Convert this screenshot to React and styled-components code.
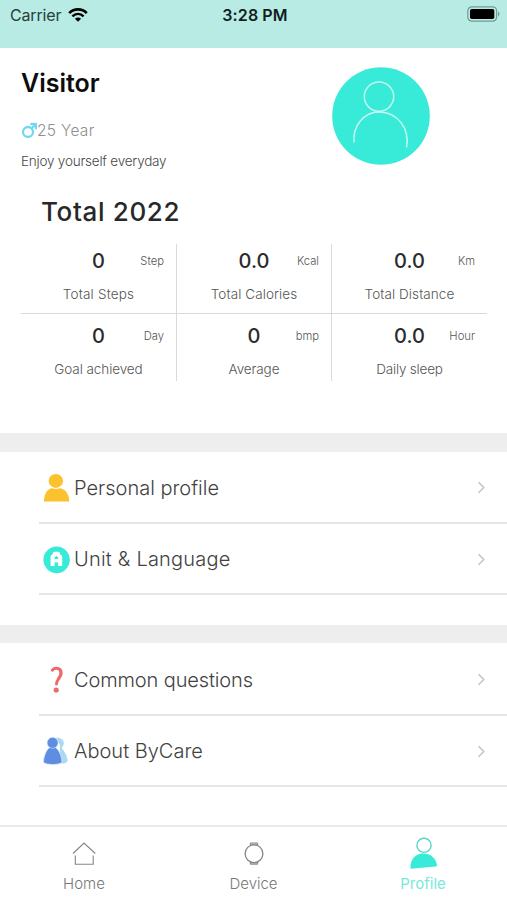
import React from "react";
import styled, { createGlobalStyle } from "styled-components";

const GlobalStyle = createGlobalStyle`
  * { box-sizing: border-box; }
  body { margin: 0; background: #fff; font-family: Inter, "Liberation Sans", sans-serif; }
`;

const Screen = styled.main`
  width: 507px;
  height: 900px;
  display: flex;
  flex-direction: column;
  overflow: hidden;
  background: #fff;
`;

const StatusBar = styled.header`
  flex: none;
  height: 48px;
  padding: 0 7px 0 10px;
  display: grid;
  grid-template-columns: 1fr auto 1fr;
  align-items: start;
  background: #b8ebe4;
`;

const Label = styled.span`
  display: block;
  white-space: nowrap;
  font-size: ${(p) => p.$size}px;
  line-height: ${(p) => p.$line}px;
  font-weight: ${(p) => p.$weight || 400};
  letter-spacing: ${(p) => p.$track || 0}px;
  color: ${(p) => p.$color};
`;

const Carrier = styled.div`
  display: flex;
  gap: 7px;
  height: 29px;
  align-items: center;
`;

const Power = styled.div`
  display: flex;
  justify-content: flex-end;
  height: 28px;
  align-items: center;
`;

const Hero = styled.section`
  flex: none;
  height: 144px;
  padding: 19px 77px 0 21px;
  display: flex;
  justify-content: space-between;
`;

const Age = styled.div`
  display: flex;
  align-items: center;
  margin: 20px 0 10px;
  height: 24px;
`;

const Heading = styled.h2`
  flex: none;
  margin: 0;
  height: 52px;
  padding: 4px 0 0 41px;
`;

const Stats = styled.section`
  flex: none;
  height: 137px;
  margin: 0 20px 52px 21px;
  display: grid;
  grid-template-columns: 156px 155px 155px;
  grid-template-rows: 70px 67px;
`;

const Stat = styled.div`
  border-right: ${(p) => (p.$last ? "0" : "1.5px solid #dadada")};
  border-bottom: ${(p) => (p.$top ? "1.5px solid #dadada" : "0")};
  padding-top: ${(p) => (p.$top ? 4 : 9)}px;
`;

const StatValue = styled.div`
  height: 27px;
  display: grid;
  grid-template-columns: 1fr auto 1fr;
  align-items: center;
  padding-right: 12px;
  padding-left: 12px;
  & > :first-child { grid-column: 2; }
  & > :last-child { justify-self: end; }
`;

const StatName = styled.div`
  display: flex;
  justify-content: center;
  margin-top: 9px;
`;

const Band = styled.div`
  flex: none;
  height: ${(p) => p.$height}px;
  background: #eee;
`;

const Menu = styled.nav`
  flex: none;
  height: ${(p) => p.$height}px;
  padding: ${(p) => p.$top || 0}px 0 0 39px;
`;

const MenuRow = styled.a`
  height: 72px;
  display: flex;
  align-items: center;
  padding: 1px 21px 0 4px;
  border-bottom: 2px solid #e6e6e6;
  &:last-child { height: 71px; }
`;

const MenuIcon = styled.span`
  width: 28px;
  height: 30px;
  margin-right: 3px;
  display: flex;
`;

const Chevron = styled.svg`
  margin-left: auto;
`;

const Tabs = styled.footer`
  flex: none;
  height: 75px;
  border-top: 2px solid #e9e9e9;
  display: grid;
  grid-template-columns: 168px 171px 168px;
`;

const Tab = styled.div`
  display: flex;
  flex-direction: column;
  align-items: center;
  padding-top: 9px;
`;

const TURQ = "#38ebd8";

const Wifi = () => (
  <svg width="20" height="16" viewBox="0 0 20 16" fill="none" stroke="#000">
    <path d="M1.2 6.1C6.2 1.2 13.8 1.2 18.8 6.1" strokeWidth="2.7" />
    <path d="M4.4 9.4C7.7 6.2 12.3 6.2 15.6 9.4" strokeWidth="2.5" />
    <path d="M10 14.8 6.9 11.8C8.7 10.1 11.3 10.1 13.1 11.8Z" fill="#000" stroke="none" />
  </svg>
);

const Battery = () => (
  <svg width="33" height="16" viewBox="0 0 33 16">
    <rect x=".8" y=".8" width="28.8" height="14.4" rx="4" fill="none" stroke="#739b95" strokeWidth="1.2" />
    <rect x="3" y="3" width="24.3" height="10" rx="1.8" fill="#000" />
    <path d="M31 5.6v4.8c1.9-.7 1.9-4.1 0-4.8Z" fill="#739b95" />
  </svg>
);

const Avatar = () => (
  <svg width="98" height="98" viewBox="0 0 98 98" fill="none">
    <circle cx="49" cy="49" r="48.8" fill={TURQ} />
    <g stroke="#c4f8f2" strokeWidth="1.5">
      <circle cx="47" cy="29.6" r="14.7" />
      <path d="M22 75.5C20.5 59 32 45 47 45c19 0 31 17 27.500 35.500" />
    </g>
  </svg>
);

const Male = () => (
  <svg width="16" height="18" viewBox="0 0 16 18" fill="none" stroke="#6fd8f4" strokeWidth="2.300">
    <circle cx="7" cy="10" r="5" />
    <path d="m10.500 6.500 4-4.200M9.300 1.900l5.500.2.200 5.200" />
  </svg>
);

const icons = {
  person: (
    <svg width="28" height="30" viewBox="0 0 28 30" fill="#fbc12f">
      <ellipse cx="12.800" cy="7.900" rx="7.200" ry="7" />
      <path d="M1 28.500C1 20 5 15.500 9.300 15.200q3.700 1.400 7.400 0C21 15.500 26.300 20 26.300 28.500Z" />
    </svg>
  ),
  language: (
    <svg width="28" height="30" viewBox="0 0 28 30">
      <circle cx="13.600" cy="15.800" r="13.200" fill={TURQ} />
      <path
        fill="#fff"
        fillRule="evenodd"
        d="M7.600 22V12.500q0-1.200 1.200-1.600.9-.4 1-1.500.2-1.600 1.700-1.600h3.800q1.500 0 1.700 1.600.1 1.100 1 1.500 1.200.4 1.200 1.600V22h-4v-3.600h-3.600V22ZM13.400 11.800l-1.900 2v1.300h3.800v-1.300Z"
      />
    </svg>
  ),
  question: (
    <svg width="28" height="30" viewBox="0 0 28 30" fill="none" stroke="#e96c6d">
      <path d="M9.300 5.200C12 2.200 18.200 2.600 18.200 8.300c0 4.300-4.400 5.500-4.700 10.700" strokeWidth="3" strokeLinecap="round" />
      <path d="M17.300 5.500c1.500 3.500-.3 6.200-2.300 8.500" strokeWidth="2.600" />
      <circle cx="13.200" cy="25" r="2.600" fill="#e96c6d" stroke="none" />
    </svg>
  ),
  people: (
    <svg width="28" height="30" viewBox="0 0 28 30">
      <path
        d="M13 1.800c4.500-.6 7.800 1.800 7.800 5.300 0 2-.9 3.600-2.100 4.800 3 3.300 5.500 8.300 6.100 12.900-.6 2-3 2.700-6 2.700h-2V9Z"
        fill="#a9daf2"
      />
      <path d="M6.800 11.500h5.600c3.500 1.800 6.200 8.800 6.600 14.300-.4 3.600-18.200 3.600-18.600 0 .5-5.500 2.800-12.300 6.400-14.300Z" fill="#5f8de2" stroke="#dcecfb" strokeWidth=".7" />
      <circle cx="9.600" cy="6.800" r="5.500" fill="#5f8de2" stroke="#dcecfb" strokeWidth=".6" />
    </svg>
  ),
  home: (
    <svg width="30" height="34" viewBox="0 0 30 34" fill="none" stroke="#858585" strokeWidth="1.100">
      <path d="M4 17.500 15 7l11.300 10.500M6.300 19.500v8.800h17.900v-8.800" />
    </svg>
  ),
  device: (
    <svg width="30" height="34" viewBox="0 0 30 34" fill="none" stroke="#858585" strokeWidth="1.300">
      <circle cx="15" cy="17.700" r="8.900" />
      <path d="M11.300 9.500V7h7.400v2.500M11.300 26v2.200h7.400V26M11.300 8.200h7.400M11.300 27h7.400" strokeWidth="1" />
    </svg>
  ),
  profile: (
    <svg width="30" height="34" viewBox="0 0 30 34">
      <circle cx="16" cy="9.300" r="7.100" fill="none" stroke="#58d5c7" strokeWidth="1.400" />
      <path d="M2.500 32.800C1.800 24 7 17.500 15 17.500c7.500 0 12.700 4.500 14 11.500-.1 1-.4 1.300-1.300 1.400Z" fill={TURQ} />
    </svg>
  ),
};

const stats = [
  ["0", "Step", "Total Steps", 0.2],
  ["0.0", "Kcal", "Total Calories", 0.08],
  ["0.0", "Km", "Total Distance", 0.08],
  ["0", "Day", "Goal achieved", -0.08],
  ["0", "bmp", "Average", -0.1],
  ["0.0", "Hour", "Daily sleep", -0.2],
];

const MenuItem = ({ icon, children, track }) => (
  <MenuRow>
    <MenuIcon>{icons[icon]}</MenuIcon>
    <Label $size={20} $line={28} $weight={300} $track={track} $color="#424242">{children}</Label>
    <Chevron width="9" height="13" viewBox="0 0 9 13" fill="none" stroke="#c3c3c3" strokeWidth="1.500">
      <path d="m1.500 1.200 5.300 5.300-5.300 5.300" />
    </Chevron>
  </MenuRow>
);

const TabItem = ({ icon, active, children }) => (
  <Tab>
    {icons[icon]}
    <Label $size={15} $line={28} $weight={active ? 400 : 300} $color={active ? "#79e8da" : "#777"}>{children}</Label>
  </Tab>
);

export default function App() {
  return (
    <Screen>
      <GlobalStyle />
      <StatusBar>
        <Carrier>
          <Label $size={16} $line={30} $track={-0.15} $color="#26403c">Carrier</Label>
          <Wifi />
        </Carrier>
        <Label $size={16} $line={30} $weight={600} $track={0.1} $color="#10201d">3:28 PM</Label>
        <Power><Battery /></Power>
      </StatusBar>
      <Hero>
        <div>
          <Label $size={25} $line={32} $weight={600} $color="#0c0c0c">Visitor</Label>
          <Age>
            <Male />
            <Label $size={15.5} $line={24} $weight={300} $track={0.3} $color="#8f8f8f">25 Year</Label>
          </Age>
          <Label $size={13.5} $line={16} $weight={300} $track={-0.22} $color="#484848">Enjoy yourself everyday</Label>
        </div>
        <Avatar />
      </Hero>
      <Heading>
        <Label $size={26} $line={32} $weight={500} $track={0.65} $color="#282828">Total 2022</Label>
      </Heading>
      <Stats>
        {stats.map(([value, unit, name, track], i) => (
          <Stat key={name} $top={i < 3} $last={i % 3 === 2}>
            <StatValue>
              <Label $size={20} $line={27} $weight={500} $color="#2b2b2b">{value}</Label>
              <Label $size={11.25} $line={27} $weight={300} $color="#555">{unit}</Label>
            </StatValue>
            <StatName>
              <Label $size={13.5} $line={20} $weight={300} $track={track} $color="#555">{name}</Label>
            </StatName>
          </Stat>
        ))}
      </Stats>
      <Band $height={19} />
      <Menu $height={173}>
        <MenuItem icon="person">Personal profile</MenuItem>
        <MenuItem icon="language" track={0.22}>Unit &amp; Language</MenuItem>
      </Menu>
      <Band $height={18} />
      <Menu $height={182} $top={1}>
        <MenuItem icon="question" track={-0.12}>Common questions</MenuItem>
        <MenuItem icon="people">About ByCare</MenuItem>
      </Menu>
      <Tabs>
        <TabItem icon="home">Home</TabItem>
        <TabItem icon="device">Device</TabItem>
        <TabItem icon="profile" active>Profile</TabItem>
      </Tabs>
    </Screen>
  );
}
